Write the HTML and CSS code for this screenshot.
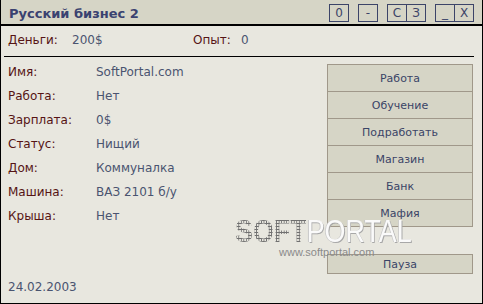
FILE: index.html
```html
<!DOCTYPE html>
<html lang="ru">
<head>
    <meta charset="UTF-8">
    <title>Русский бизнес 2</title>
    <link rel="stylesheet" href="styles.css">
</head>
<body>

<div class="okno">
    <!-- заголовок -->
    <div class="zagolovok">
        <span class="nazvanie">Русский бизнес 2</span>
        <div class="knopki-okna">
            <div class="gruppa"><span>0</span></div>
            <div class="gruppa"><span>-</span></div>
            <div class="gruppa"><span>С</span><span>З</span></div>
            <div class="gruppa"><span>_</span><span>X</span></div>
        </div>
    </div>

    <div class="schet">
        <span class="metka dengi">Деньги:</span><span class="znachenie dengi-v">200$</span>
        <span class="metka opyt">Опыт:</span><span class="znachenie">0</span>
    </div>
    <div class="liniya"></div>

    <div class="osnova">
        <div class="levo">
            <div class="spisok">
                <div class="stroka"><span class="metka">Имя:</span><span class="znachenie">SoftPortal.com</span></div>
                <div class="stroka"><span class="metka">Работа:</span><span class="znachenie">Нет</span></div>
                <div class="stroka"><span class="metka">Зарплата:</span><span class="znachenie">0$</span></div>
                <div class="stroka"><span class="metka">Статус:</span><span class="znachenie">Нищий</span></div>
                <div class="stroka"><span class="metka">Дом:</span><span class="znachenie">Коммуналка</span></div>
                <div class="stroka"><span class="metka">Машина:</span><span class="znachenie">ВАЗ 2101 б/у</span></div>
                <div class="stroka"><span class="metka">Крыша:</span><span class="znachenie">Нет</span></div>
            </div>
            <div class="data">24.02.2003</div>
        </div>

        <div class="menu">
            <button class="knopka">Работа</button>
            <button class="knopka">Обучение</button>
            <button class="knopka">Подработать</button>
            <button class="knopka">Магазин</button>
            <button class="knopka">Банк</button>
            <button class="knopka">Мафия</button>
            <button class="knopka pauza">Пауза</button>
        </div>
    </div>

    <!-- водяной знак поверх окна -->
    <div class="znak">
        <div class="znak-logo"><span class="soft">SOFT</span><span class="portal">PORTAL</span></div>
        <div class="znak-sait">www.softportal.com</div>
    </div>
</div>

</body>
</html>
```

FILE: styles.css
```css
/* Окно игры */
body {
    margin: 0;
    font-family: "DejaVu Sans", sans-serif;
}
.okno {
    position: relative;
    width: 483px;
    height: 304px;
    box-sizing: border-box;
    border-left: 1px solid #000;
    border-right: 1px solid #000;
    border-bottom: 1px solid #000;
    background-color: #e8e7df;
    display: flex;
    flex-direction: column;
    overflow: hidden;
}
.zagolovok {
    height: 24px;
    border-bottom: 2px solid #000;
    background-color: #d6d5c6;
    display: flex;
    align-items: center;
    padding-left: 8px;
    padding-right: 8px;
}
.nazvanie {
    margin-top: 2px;
    font-weight: bold;
    font-size: 13px;
    color: #3a4270;
}
.knopki-okna {
    margin-left: auto;
    display: flex;
    gap: 9px;
    margin-top: 1px;
}
.gruppa {
    display: flex;
    border: 1px solid #3c4468;
    height: 16px;
}
.gruppa span {
    width: 18px;
    text-align: center;
    font-size: 12px;
    line-height: 16px;
    color: #3c4468;
}
.gruppa span + span {
    border-left: 1px solid #3c4468;
}
/* Деньги и опыт */
.schet {
    display: flex;
    margin-top: 7px;
    padding-left: 7px;
    font-size: 12px;
    line-height: 14px;
}
.metka {
    color: #561414;
}
.znachenie {
    color: #4a5470;
}
.dengi {
    width: 64px;
}
.dengi-v {
    width: 121px;
}
.opyt {
    width: 48px;
}
.liniya {
    margin: 9px 0 0 3px;
    width: 470px;
    height: 1px;
    background-color: #000;
}
/* Основная часть */
.osnova {
    flex: 1;
    display: flex;
}
.levo {
    flex: 1;
    display: flex;
    flex-direction: column;
    padding: 3px 0 9px 7px;
    font-size: 12px;
}
.stroka {
    display: flex;
    line-height: 24px;
}
.stroka .metka {
    width: 88px;
}
.data {
    margin-top: auto;
    line-height: 14px;
    color: #4a5470;
}
.menu {
    width: 146px;
    margin: 7px 9px 0 0;
    display: flex;
    flex-direction: column;
}
.knopka {
    height: 28px;
    box-sizing: border-box;
    border: 1px solid #a0988a;
    background-color: #d6d5c6;
    font-family: "DejaVu Sans", sans-serif;
    font-size: 11px;
    color: #3a4466;
    padding: 0;
    cursor: pointer;
}
.knopka + .knopka {
    margin-top: -1px;
}
.knopka.pauza {
    height: 20px;
    margin-top: 27px;
}
/* Водяной знак */
.znak {
    position: absolute;
    left: 234px;
    top: 215px;
    pointer-events: none;
}
.znak-logo {
    font-family: "Liberation Sans", sans-serif;
    font-size: 32px;
    line-height: 32px;
    transform: scaleX(0.84);
    transform-origin: left top;
    white-space: nowrap;
}
.soft {
    font-weight: bold;
    color: transparent;
    background-image: radial-gradient(circle, #707070 1px, transparent 1.2px);
    background-size: 3px 3px;
    -webkit-background-clip: text;
    background-clip: text;
}
.portal {
    color: #fafafa;
    text-shadow: 1px 1px 0 #a8a8a8, -1px 0 0 #c8c8c8;
}
.znak-sait {
    margin: 0 0 0 44px;
    font-family: "Liberation Sans", sans-serif;
    font-size: 11px;
    line-height: 11px;
    color: #8a8a8a;
}
```
